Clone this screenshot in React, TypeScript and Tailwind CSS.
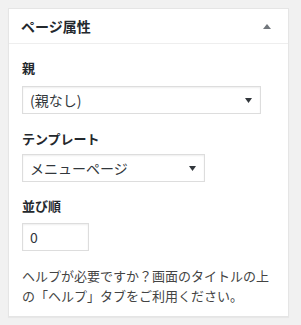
const font = { fontFamily: '"Noto Sans CJK JP", "Noto Sans", sans-serif' }

function Caret({ className }: { className?: string }) {
  return (
    <svg width="7" height="5" viewBox="0 0 7 5" className={className}>
      <path d="M0 0 H7 L3.5 5 Z" fill="#32373c" />
    </svg>
  )
}

function SelectBox({ value, width }: { value: string; width: string }) {
  return (
    <div
      className={`${width} h-[28px] flex items-center justify-between border border-[#dddddd] bg-white pl-[7px] pr-[8px] shadow-[inset_0_1px_2px_rgba(0,0,0,0.07)] text-[14px] text-[#32373c]`}
    >
      <span>{value}</span>
      <Caret />
    </div>
  )
}

export default function App() {
  return (
    <div className="min-h-[325px] bg-[#f1f1f1] pt-2 pl-2" style={font}>
      <div className="w-[281px] border border-[#e5e5e5] bg-white shadow-[0_1px_1px_rgba(0,0,0,0.04)]">
        {/* Header */}
        <div className="h-[35px] flex items-center justify-between border-b border-[#eeeeee] px-3">
          <h2 className="text-[14px] font-semibold text-[#23282d] leading-none">ページ属性</h2>
          <svg width="8" height="5" viewBox="0 0 8 5" className="mr-[5px]">
            <path d="M4 0 L8 5 H0 Z" fill="#72777c" />
          </svg>
        </div>

        {/* Body */}
        <div className="px-[13px] pb-[11px] text-[13px] text-[#444444]">
          <p className="mt-[15px] mb-[9px] leading-[18px] font-semibold text-[#23282d]">親</p>
          <SelectBox value="(親なし)" width="w-[239px]" />

          <p className="mt-[16px] mb-[6px] leading-[18px] font-semibold text-[#23282d]">テンプレート</p>
          <SelectBox value="メニューページ" width="w-[183px]" />

          <p className="mt-[15px] mb-[8px] leading-[18px] font-semibold text-[#23282d]">並び順</p>
          <div className="w-[67px] h-[28px] flex items-center border border-[#dddddd] bg-white pl-[7px] shadow-[inset_0_1px_2px_rgba(0,0,0,0.07)] text-[14px] text-[#32373c]">
            0
          </div>

          <p className="mt-[15px] leading-[19.5px]">
            ヘルプが必要ですか？画面のタイトルの上の「ヘルプ」タブをご利用ください。
          </p>
        </div>
      </div>
    </div>
  )
}
